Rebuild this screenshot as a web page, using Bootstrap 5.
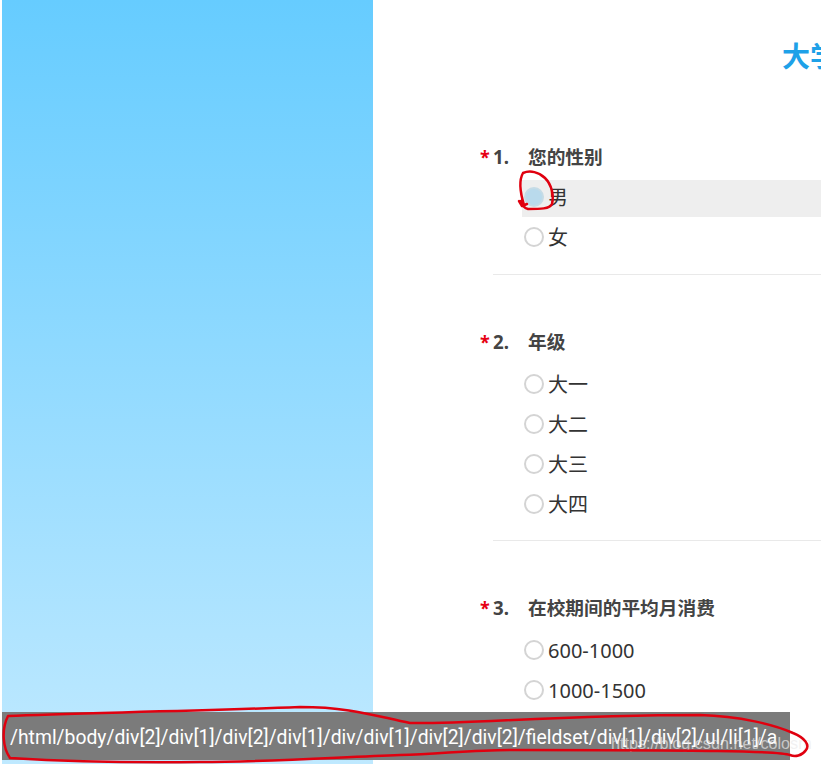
<!DOCTYPE html>
<html lang="zh">
<head>
  <meta charset="UTF-8" />
  <meta name="viewport" content="width=device-width, initial-scale=1" />
  <title>大学生消费情况调查</title>
  <link href="https://cdn.jsdelivr.net/npm/bootstrap@5.3.0/dist/css/bootstrap.min.css" rel="stylesheet" />
  <style>
    html, body { height: 100%; overflow: hidden; }
    body { font-family: "Noto Sans", "Noto Sans CJK SC", sans-serif; background: #fff; color: #333; }
    .shot { height: 764px; width: 821px; overflow: hidden; }
    .side-panel { width: 371px; margin-left: 2px; flex: none; background: linear-gradient(180deg, #66ccff 0%, #bfe9ff 100%); }
    .survey { width: 448px; flex: none; padding-left: 108px; overflow: hidden; }
    .survey-title { height: 144px; margin: 0; padding: 36px 0 0 301px; font-size: 28px; line-height: 38px; font-weight: 700; color: #1ea1e8; white-space: nowrap; font-family: "Noto Sans CJK SC", sans-serif; }
    .q-block { padding-left: 12px; }
    .q-gap-two { margin-top: 54px; }
    .q-gap-two .q-head { margin-bottom: 12px; }
    .q-gap-two .q-rule { margin-top: 15px; }
    .q-head { height: 24px; line-height: 24px; font-size: 18.7px; font-weight: 700; color: #444; white-space: nowrap; position: relative; margin-bottom: 10px; }
    .q-head .q-star { position: absolute; left: -13px; top: 1px; color: #e60012; font-size: 18px; }
    .q-head .q-num { display: inline-block; width: 35px; }
    .q-head .q-text { font-family: "Noto Sans CJK SC", sans-serif; }
    .opt-list { padding-left: 29px; list-style: none; margin: 0; }
    .opt-item { height: 40px; padding-left: 2px; font-size: 20px; color: #333; white-space: nowrap; }
    .opt-item.is-hover { background: linear-gradient(#eee, #eee) no-repeat 0 2px / 100% 37px; }
    .opt-radio { width: 20px; height: 20px; flex: none; border: 2px solid #d4d4d4; border-radius: 50%; background: #fff; margin-right: 4px; margin-top: -2px; }
    .is-hover .opt-radio { background: #b9daec; border-color: #c5dbe6; }
    .q-rule { border-top: 1px solid #e9e9e9; margin: 16px 0 0; opacity: 1; }
    .xpath-bar { position: absolute; left: 2px; top: 712px; width: 788px; height: 48px; background: #7b7b7b; color: #fff; font-family: "Roboto", sans-serif; font-size: 19.33px; line-height: 52px; padding-left: 8px; white-space: nowrap; overflow: hidden; }
    .ink-marks { position: absolute; left: 0; top: 0; pointer-events: none; }
    .watermark { position: absolute; left: 611px; top: 731px; color: rgba(235,235,235,.68); font-size: 16.2px; line-height: 24px; white-space: nowrap; font-family: "Liberation Sans", sans-serif; }
  </style>
</head>
<body>

<div class="shot d-flex position-relative">
  <div class="side-panel"></div>

  <div class="survey">
    <h1 class="survey-title">大学生消费情况调查</h1>

    <div class="q-block">
      <div class="q-head"><span class="q-star">*</span><span class="q-num">1.</span><span class="q-text">您的性别</span></div>
      <ul class="opt-list">
        <li class="opt-item is-hover d-flex align-items-center"><span class="opt-radio"></span>男</li>
        <li class="opt-item d-flex align-items-center"><span class="opt-radio"></span>女</li>
      </ul>
      <hr class="q-rule" />
    </div>

    <div class="q-block q-gap-two">
      <div class="q-head"><span class="q-star">*</span><span class="q-num">2.</span><span class="q-text">年级</span></div>
      <ul class="opt-list">
        <li class="opt-item d-flex align-items-center"><span class="opt-radio"></span>大一</li>
        <li class="opt-item d-flex align-items-center"><span class="opt-radio"></span>大二</li>
        <li class="opt-item d-flex align-items-center"><span class="opt-radio"></span>大三</li>
        <li class="opt-item d-flex align-items-center"><span class="opt-radio"></span>大四</li>
      </ul>
      <hr class="q-rule" />
    </div>

    <div class="q-block q-gap-two">
      <div class="q-head"><span class="q-star">*</span><span class="q-num">3.</span><span class="q-text">在校期间的平均月消费</span></div>
      <ul class="opt-list">
        <li class="opt-item d-flex align-items-center"><span class="opt-radio"></span>600-1000</li>
        <li class="opt-item d-flex align-items-center"><span class="opt-radio"></span>1000-1500</li>
      </ul>
    </div>
  </div>

  <div class="xpath-bar">/html/body/div[2]/div[1]/div[2]/div[1]/div/div[1]/div[2]/div[2]/fieldset/div[1]/div[2]/ul/li[1]/a</div>
  <div class="watermark">https://blog.csdn.net/colosm</div>

  <svg class="ink-marks" width="821" height="764" viewBox="0 0 821 764" fill="none" stroke="#e0000f" stroke-linecap="round" stroke-linejoin="round">
    <path stroke-width="2.5" d="M524 205C520 192 519 180 523 173C530 170 539 172 545 178C552 185 554 196 552 204C550 209 540 209 528 209C524 208 522 206 521 201" />
    <path stroke-width="2.5" d="M519 201L522 206L527 204" />
    <path stroke-width="2.5" d="M8 716C70 713 170 712 300 707C350 707 375 716 410 723C470 724 560 715 700 715C740 716 775 725 793 733C805 738 810 745 806 750C802 756 795 757 790 755C780 751 700 750 510 750C470 750 440 754 400 755C340 757 270 762 200 762C130 763 60 761 10 758C3 748 1 730 8 716Z" />
  </svg>
</div>

<script src="https://cdn.jsdelivr.net/npm/bootstrap@5.3.0/dist/js/bootstrap.bundle.min.js"></script>
</body>
</html>
